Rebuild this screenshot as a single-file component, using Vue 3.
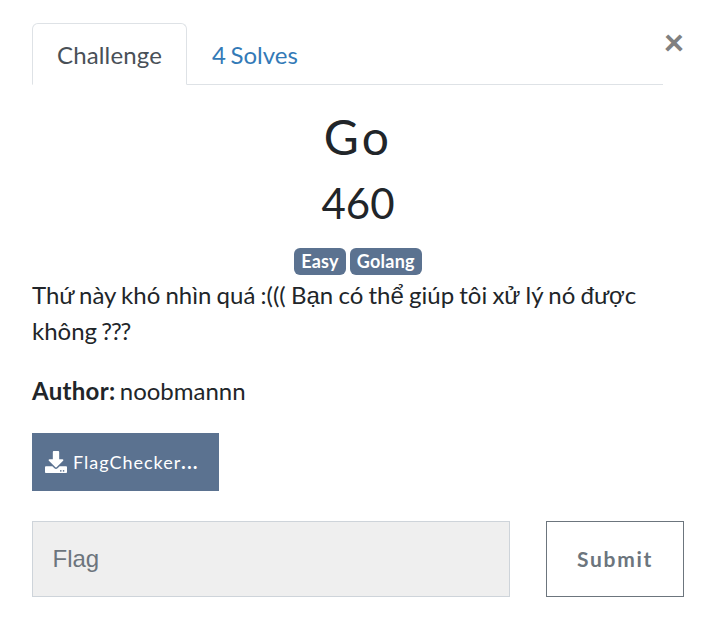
<script setup>
const tags = ['Easy', 'Golang']
</script>

<template>
  <main class="modal">
    <button class="close" aria-label="Close">×</button>
    <nav class="tabs">
      <a class="tab active">Challenge</a>
      <a class="tab">4 Solves</a>
    </nav>
    <h2 class="name">Go</h2>
    <h3 class="value">460</h3>
    <div class="tags"><span v-for="t in tags" :key="t" class="tag">{{ t }}</span></div>
    <div class="desc">
      <p>Thứ này khó nhìn quá :((( B<i>ạ</i>n có th<i>ể</i> giúp tôi x<i>ử</i> lý nó đư<i>ợ</i>c không <span class="marks">???</span></p>
      <p class="author"><strong>Author:</strong> noobmannn</p>
    </div>
    <a class="file">
      <svg viewBox="0 0 512 512" width="22" height="22"><path fill="#fff" d="M206 0h100c13.300 0 24 10.700 24 24v168h77.700c17.800 0 26.700 21.500 14.100 34.100L269.700 378.300c-7.500 7.500-19.800 7.500-27.300 0L90.100 226.100c-12.600-12.600-3.700-34.100 14.100-34.100H182V24c0-13.300 10.700-24 24-24zm306 376v112c0 13.300-10.700 24-24 24H24c-13.300 0-24-10.700-24-24V376c0-13.300 10.700-24 24-24h146.700l49 49c20.100 20.100 52.500 20.100 72.600 0l49-49H488c13.300 0 24 10.700 24 24zm-124 88c0-11-9-20-20-20s-20 9-20 20 9 20 20 20 20-9 20-20zm64 0c0-11-9-20-20-20s-20 9-20 20 9 20 20 20 20-9 20-20z"/></svg>
      <span class="label">FlagChecker<b>...</b></span>
    </a>
    <div class="row">
      <input class="flag" placeholder="Flag">
      <button class="submit">Submit</button>
    </div>
  </main>
</template>

<style>
body { margin: 0; background: #fff; }
</style>
<style scoped>
* { box-sizing: border-box; }
.modal { position: relative; width: 715px; height: 626px; padding: 23px 31px 0 32px; font: 24px/36px Lato, "Noto Sans", sans-serif; color: #212529; }
.close { position: absolute; left: 663px; top: 23px; width: 22px; height: 36px; padding: 0; border: 0; background: none; font: 900 36px/36px Lato, sans-serif; color: #808080; }
.tabs { display: flex; width: 631px; height: 62px; border-bottom: 1px solid #dee2e6; }
.tab { height: 62px; padding: 14px 25px 0; color: #337ab7; word-spacing: -1.5px; }
.active { width: 155px; padding: 13px 24px 0; border: 1px solid #dee2e6; border-bottom-color: #fff; border-radius: 6px 6px 0 0; background: #fff; color: #495057; letter-spacing: 0.15px; }
.name, .value { margin: 0; text-align: center; font-weight: 400; }
.name { padding-top: 23px; font-size: 48px; line-height: 58px; letter-spacing: 3.3px; }
.value { padding-top: 12px; font-size: 42px; line-height: 50px; }
.tags { display: flex; justify-content: center; gap: 4px; height: 27px; margin-top: 20px; }
.tag { height: 27px; padding: 0 7px; border-radius: 6px; background: #5b7290; color: #fff; font-size: 18px; line-height: 27px; font-weight: 700; letter-spacing: 0.25px; }
.desc { padding-top: 2px; }
.desc p { margin: 0 0 24px; word-spacing: -0.95px; }
.desc .author { word-spacing: -1.8px; }
.desc i { font-family: "Liberation Sans", sans-serif; font-style: normal; line-height: 1; }
.desc strong { letter-spacing: 0.3px; }
.marks { margin-left: -1px; letter-spacing: -1.1px; }
.file { display: flex; align-items: center; gap: 6px; width: 187px; height: 58px; padding-left: 13px; background: #5b7290; color: #fff; font-size: 18px; }
.label { margin-top: -1px; letter-spacing: 1px; }
.label b { font-weight: 900; letter-spacing: 1.6px; }
.row { display: flex; justify-content: space-between; margin-top: 30px; }
.flag { width: 478px; height: 76px; padding: 0 19.500px; border: 1px solid #ced4da; border-radius: 0; background: #efefef; font: 24px "Liberation Sans", sans-serif; }
.flag::placeholder { color: #6c757d; }
.submit { width: 138px; height: 76px; padding: 0 0 2px; border: 1px solid #6c757d; background: #fff; color: #6c757d; font: 700 21px Lato, sans-serif; letter-spacing: 1.7px; }
</style>
